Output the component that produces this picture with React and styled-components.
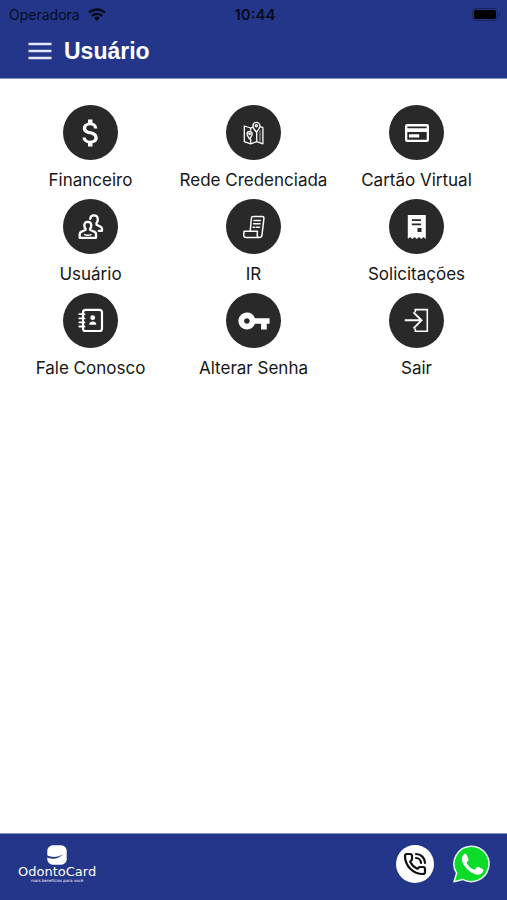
import styled, { createGlobalStyle } from "styled-components";
import { MdAttachMoney, MdVpnKey } from "react-icons/md";
import { PhoneCall } from "lucide-react";

const GlobalStyle = createGlobalStyle`
  * {
    box-sizing: border-box;
  }

  body {
    margin: 0;
    background: #fff;
    color: #161616;
    font-family: Inter, "Liberation Sans", sans-serif;
  }
`;

const Page = styled.div`
  display: flex;
  flex-direction: column;
  min-height: 100vh;
`;

const Header = styled.header`
  background: #243689;
  border-bottom: 1px solid #8492c4;
  padding-bottom: 4px;
`;

const StatusBar = styled.div`
  display: grid;
  grid-template-columns: 1fr auto 1fr;
  align-items: center;
  height: 28px;
  padding: 0 6px 0 9px;
  color: #070b1c;
  font-size: 14px;
`;

const Carrier = styled.span`
  display: flex;
  align-items: center;
  gap: 8px;
`;

const Clock = styled.time`
  font-size: 15px;
  font-weight: 600;
`;

const Battery = styled.svg`
  justify-self: end;
`;

const Toolbar = styled.div`
  display: flex;
  align-items: center;
  gap: 12px;
  height: 46px;
  padding: 0 28px;
`;

const MenuButton = styled.button`
  display: flex;
  padding: 0;
  border: none;
  background: transparent;
  color: #e4e7fa;
  cursor: pointer;
`;

const Title = styled.h1`
  margin: 0;
  color: #fff;
  font-family: "Liberation Sans", Arial, sans-serif;
  font-size: 23px;
  font-weight: 700;
  line-height: 28px;
`;

const Menu = styled.main`
  flex: 1;
  display: grid;
  grid-template-columns: repeat(3, 1fr);
  align-content: start;
  row-gap: 8px;
  padding: 26px 9px;
`;

const MenuItem = styled.button`
  display: flex;
  flex-direction: column;
  align-items: center;
  gap: 9px;
  padding: 0;
  border: none;
  background: transparent;
  color: inherit;
  font-family: inherit;
  font-size: 17px;
  line-height: 22px;
  white-space: nowrap;
  cursor: pointer;
`;

const IconCircle = styled.span`
  display: flex;
  align-items: center;
  justify-content: center;
  width: 55px;
  height: 55px;
  border-radius: 50%;
  background: #292929;
  color: #fff;
`;

const Footer = styled.footer`
  display: flex;
  align-items: center;
  justify-content: space-between;
  height: 67px;
  padding: 0 17px 7px 18px;
  border-top: 1px solid #8492c4;
  background: #243689;
`;

const Brand = styled.div`
  display: flex;
  flex-direction: column;
  align-items: center;
  color: #fff;
  font-family: "DejaVu Sans", sans-serif;
`;

const BrandName = styled.span`
  font-size: 13px;
  line-height: 14px;
`;

const Tagline = styled.small`
  font-size: 4px;
  line-height: 4px;
`;

const Contacts = styled.div`
  display: flex;
  align-items: center;
  gap: 18px;
`;

const ContactLink = styled.a`
  display: flex;
  align-items: center;
  justify-content: center;
  width: 38px;
  height: 38px;
  border-radius: 50%;
  background: ${(props) => props.$background || "transparent"};
  color: #111;
`;

const Glyph = ({ children, ...rest }) => (
  <svg
    width="55"
    height="55"
    viewBox="0 0 55 55"
    fill="none"
    stroke="currentColor"
    strokeWidth="2"
    strokeLinejoin="round"
    strokeLinecap="round"
    aria-hidden="true"
    {...rest}
  >
    {children}
  </svg>
);

const MapIcon = () => (
  <Glyph strokeWidth="1.3">
    <path d="M26.800 22.300 24.700 23 18.300 21v15.600l6.400 2.200 6-2.200 6.200 2.200V22.600l-2.600-.9M24.700 34.500v4M24.700 23v2M30.700 27.500v8.700" />
    <path d="M30.400 27c-2.400-2.600-3.500-4.400-3.500-6.100a3.500 3.500 0 0 1 7 0c0 1.700-1.100 3.500-3.500 6.100Z" />
    <circle cx="30.400" cy="20.800" r="1.100" />
    <path d="M23.600 34c-1.800-2.300-2.600-3.500-2.600-4.900a2.600 2.600 0 0 1 5.200 0c0 1.400-.8 2.600-2.600 4.900Z" />
    <circle cx="23.600" cy="29" r=".7" />
    <path d="M34 26v10" strokeOpacity=".5" />
  </Glyph>
);

const CardIcon = () => (
  <Glyph stroke="none">
    <rect x="16" y="19" width="24" height="18" rx="2.200" fill="currentColor" />
    <path d="M18.300 21.500h19.400v1.800H18.300zM18.300 27h19.400v7.700H18.300z" fill="#292929" />
    <rect x="20" y="29.200" width="10.200" height="3.300" rx=".6" fill="currentColor" />
  </Glyph>
);

const UsersIcon = () => (
  <Glyph strokeWidth="2.300">
    <path d="M27.200 19.800c.3-2.200 1.700-3.400 3.700-3.400 2.400 0 3.900 1.600 3.900 4 0 1.500-.5 2.600-1.300 3.500v1.800l4.100 2c1 .5 1.400 1.200 1.400 2.200v1.900h-3.200" />
    <path d="M22.600 30.800v-1c-.8-.8-1.300-1.900-1.300-3.200 0-2.300 1.300-3.800 3.500-3.800s3.500 1.500 3.500 3.800c0 1.300-.5 2.400-1.300 3.200v1l4.600 2.100c1 .5 1.400 1.200 1.400 2.200v3.700H16.700v-3.700c0-1 .4-1.700 1.400-2.200Z" />
    <path d="M21.600 35.600c2 .9 4.400.9 6.400 0" strokeWidth="1.500" />
  </Glyph>
);

const ScrollIcon = () => (
  <Glyph strokeWidth="1.500">
    <path d="M24.200 32.200 25.400 19.300c.1-1.200.8-1.800 1.800-1.800h9.200c1.100 0 1.600.7 1.500 1.800L36 36c-.2 1.700-1.200 2.600-2.700 2.600H20.400c-2 0-2.800-1.200-2.600-3l.3-3.400h13.400l-.3 3.300c-.1 1.900.6 3.100 2.100 3.100" />
    <path d="M28 21.400h6.400M27.600 24.800H34M27.200 28.200h1.500M30.500 28.200h3" />
  </Glyph>
);

const ReceiptIcon = () => (
  <Glyph stroke="none">
    <path
      d="M18.800 16h18v24l-2.200-2-2.300 2-2.300-2-2.200 2-2.300-2-2.200 2-2.300-2-2.200 2Z"
      fill="currentColor"
    />
    <path d="M22.800 20.200H32v1.700h-9.200zM22.800 24.600H32v1.700h-9.200zM28.500 29h4v4h-4z" fill="#292929" />
  </Glyph>
);

const ContactsIcon = () => (
  <Glyph strokeWidth="2.200">
    <rect x="20" y="16.800" width="19" height="21.200" rx="2.600" />
    <path d="M16.300 21.200h5.200M16.300 25.300h5.200M16.300 29.400h5.200M16.300 33.500h5.200" strokeWidth="1.800" />
    <g fill="currentColor" stroke="none">
      <circle cx="29.700" cy="24.700" r="2.400" />
      <path d="M26.200 31.700c0-2 1.500-3.200 3.500-3.200s3.600 1.200 3.600 3.200Z" />
    </g>
  </Glyph>
);

const ExitIcon = () => (
  <Glyph strokeWidth="1.900" strokeLinejoin="miter" strokeLinecap="butt">
    <path d="M15.800 27.300h16M24.500 19.300l8 8-8 8" />
    <path d="M26.300 19.300v-2.700h12v21.700h-12v-2.700" strokeWidth="1.600" />
  </Glyph>
);

const WhatsAppIcon = () => (
  <svg width="38" height="38" viewBox="0 0 38 38" aria-hidden="true">
    <path
      d="M19.200 1.200a17.700 17.700 0 1 1-8.500 33.200L2 36.700l2.600-8.500a17.700 17.700 0 0 1 14.600-27Z"
      fill="#0bdc28"
      stroke="#e9fbef"
      strokeWidth="1.500"
      strokeLinejoin="round"
    />
    <path
      d="M12.400 9.100c.8-.5 1.800-.3 2.200.6l1.900 4.200c.3.700.1 1.300-.4 1.900l-1.200 1.500c-.3.400-.3.800 0 1.200 1.700 2.900 3.900 4.800 6.900 6.100.5.200.9.100 1.200-.3l1.700-2.100c.4-.5 1-.7 1.600-.4l4.300 2.100c.8.400 1 .9.800 1.700-.5 2.700-2.700 4.200-5.400 4.200-2.600 0-6.500-1.700-9.300-4.200-3.200-2.800-6.300-6.600-6.800-10.300-.3-2.500.7-5 2.500-6.200Z"
      fill="#fff"
    />
  </svg>
);

const menuItems = [
  { label: "Financeiro", icon: <MdAttachMoney size={36} /> },
  { label: "Rede Credenciada", icon: <MapIcon /> },
  { label: "Cartão Virtual", icon: <CardIcon /> },
  { label: "Usuário", icon: <UsersIcon /> },
  { label: "IR", icon: <ScrollIcon /> },
  { label: "Solicitações", icon: <ReceiptIcon /> },
  { label: "Fale Conosco", icon: <ContactsIcon /> },
  { label: "Alterar Senha", icon: <MdVpnKey size={34} /> },
  { label: "Sair", icon: <ExitIcon /> },
];

export default function App() {
  return (
    <Page>
      <GlobalStyle />
      <Header>
        <StatusBar>
          <Carrier>
            Operadora
            <svg width="18" height="13" viewBox="0 0 18 13" fill="none" stroke="currentColor" strokeWidth="2.400">
              <path d="M1 4.700a11.500 11.500 0 0 1 16 0M4 7.900a7.200 7.200 0 0 1 10 0" />
              <path d="M9 12.900 6.100 10a4.100 4.100 0 0 1 5.800 0Z" fill="currentColor" stroke="none" />
            </svg>
          </Carrier>
          <Clock>10:44</Clock>
          <Battery width="29" height="13" viewBox="0 0 29 13">
            <rect x=".5" y=".5" width="25" height="12" rx="3.500" fill="none" stroke="#18245c" />
            <rect x="2" y="2" width="22" height="9" rx="2" fill="#000" />
            <path d="M27 4.500c1.500.6 1.500 3.400 0 4Z" fill="#18245c" />
          </Battery>
        </StatusBar>
        <Toolbar>
          <MenuButton aria-label="Menu">
            <svg width="24" height="18" viewBox="0 0 24 18" stroke="currentColor" strokeWidth="2.400">
              <path d="M.5 2h23M.5 9h23M.5 16h23" />
            </svg>
          </MenuButton>
          <Title>Usuário</Title>
        </Toolbar>
      </Header>

      <Menu>
        {menuItems.map((item) => (
          <MenuItem key={item.label}>
            <IconCircle>{item.icon}</IconCircle>
            {item.label}
          </MenuItem>
        ))}
      </Menu>

      <Footer>
        <Brand>
          <svg width="20" height="20" viewBox="0 0 20 20" aria-hidden="true">
            <rect x=".3" y=".3" width="19.400" height="19.400" rx="5.500" fill="#fff" />
            <path d="M0 10.300c5 2.500 11.300 2.200 16-1.300-3.700 5.100-11 5.800-16 3.200Z" fill="#243689" />
          </svg>
          <BrandName>OdontoCard</BrandName>
          <Tagline>mais benefícios para você</Tagline>
        </Brand>
        <Contacts>
          <ContactLink href="#telefone" aria-label="Telefone" $background="#fff">
            <PhoneCall size={24} strokeWidth={2.2} />
          </ContactLink>
          <ContactLink href="#whatsapp" aria-label="WhatsApp">
            <WhatsAppIcon />
          </ContactLink>
        </Contacts>
      </Footer>
    </Page>
  );
}
